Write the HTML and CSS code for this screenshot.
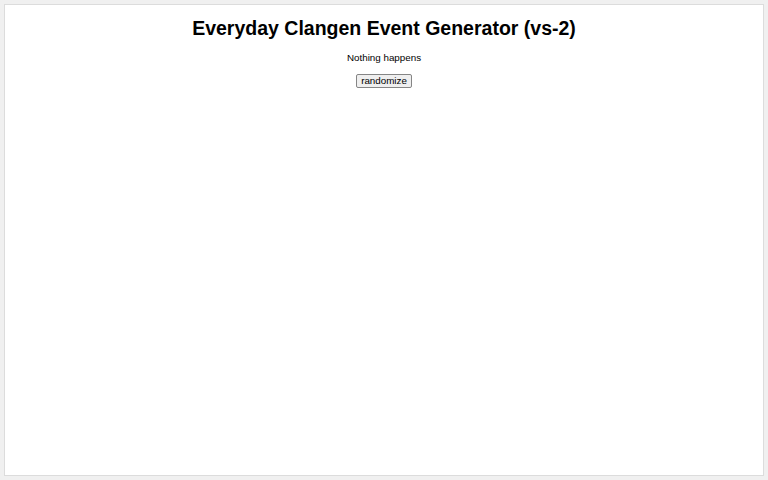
FILE: index.html
```html
<!DOCTYPE html>
<html lang="en">
<head>
<meta charset="utf-8">
<title>Everyday Clangen Event Generator (vs-2)</title>
<link rel="stylesheet" href="styles.css">
</head>
<body>
<main class="panel">
  <h1 class="title">Everyday Clangen Event Generator (vs-2)</h1>
  <p class="event">Nothing happens</p>
  <button class="randomize" type="button">randomize</button>
</main>
</body>
</html>
```
FILE: styles.css
```css
html, body {
  margin: 0;
  height: 100%;
}

body {
  background: #f0f0f0;
  padding: 4px;
  box-sizing: border-box;
  font-family: "Liberation Sans", Arial, sans-serif;
  color: #000;
}

.panel {
  box-sizing: border-box;
  height: 472px;
  background: #fff;
  border: 1px solid #dcdcdc;
  display: flex;
  flex-direction: column;
  align-items: center;
  padding-top: 11px;
}

.title {
  margin: 0;
  font-size: 19.5px;
  font-weight: bold;
  line-height: 24px;
}

.event {
  margin: 12px 0 0;
  font-size: 9.8px;
  line-height: 12px;
}

.randomize {
  margin-top: 10px;
  font-family: "Liberation Sans", Arial, sans-serif;
  font-size: 9.8px;
  line-height: 12px;
  padding: 0 4px;
  background: #efefef;
  border: 1px solid #858585;
  border-radius: 2px;
  color: #000;
}
```
